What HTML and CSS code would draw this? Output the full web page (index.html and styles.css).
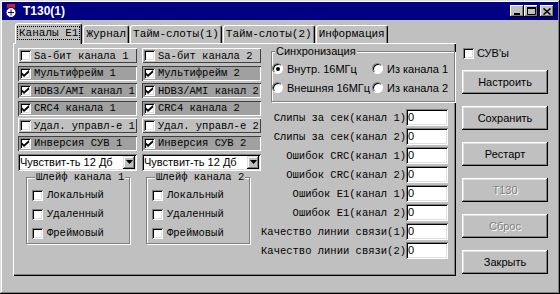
FILE: index.html
```html
<!DOCTYPE html>
<html lang="ru">

<head>
    <meta charset="UTF-8">
    <title>T130(1)</title>
    <link rel="stylesheet" href="styles.css">
</head>

<body>
    <div class="window">
        <div class="titlebar">
            <svg class="app-icon" viewBox="0 0 14 14" width="14" height="14">
                <rect x="3" y="0" width="8" height="4" fill="#d02020" />
                <circle cx="7" cy="8.5" r="5" fill="#fff" stroke="#000080" />
                <path d="M4 8.5h6M7 5.5v6" stroke="#000080" />
            </svg>
            <span class="title">T130(1)</span>
            <div class="caption-buttons">
                <span class="cap-btn">
                    <svg width="8" height="7"><rect x="1" y="5" width="6" height="2" /></svg>
                </span>
                <span class="cap-btn">
                    <svg width="9" height="8"><path d="M0.5 0.5h8v7h-8z" fill="none" stroke="#000" /><rect x="0" y="0" width="9" height="2" /></svg>
                </span>
                <span class="cap-btn close">
                    <svg width="8" height="7"><path d="M0.5 0.5l7 6M7.5 0.5l-7 6" stroke="#000" stroke-width="1.5" /></svg>
                </span>
            </div>
        </div>

        <div class="client">
            <div class="tabs">
                <div class="tab-strip">
                    <div class="tab active"><span class="focus">Каналы E1</span></div>
                    <div class="tab">Журнал</div>
                    <div class="tab">Тайм-слоты(1)</div>
                    <div class="tab">Тайм-слоты(2)</div>
                    <div class="tab">Информация</div>
                </div>

                <div class="tab-panel">
                    <div class="left-block">
                        <div class="toggles">
                            <div class="toggle"><span class="check"></span>Sa-бит канала 1</div>
                            <div class="toggle"><span class="check"></span>Sa-бит канала 2</div>
                            <div class="toggle on"><span class="check checked"></span>Мультифрейм 1</div>
                            <div class="toggle on"><span class="check checked"></span>Мультифрейм 2</div>
                            <div class="toggle on"><span class="check checked"></span>HDB3/AMI канал 1</div>
                            <div class="toggle on"><span class="check checked"></span>HDB3/AMI канал 2</div>
                            <div class="toggle on"><span class="check checked"></span>CRC4 канала 1</div>
                            <div class="toggle on"><span class="check checked"></span>CRC4 канала 2</div>
                            <div class="toggle"><span class="check"></span>Удал. управл-е 1</div>
                            <div class="toggle"><span class="check"></span>Удал. управл-е 2</div>
                            <div class="toggle on"><span class="check checked"></span>Инверсия СУВ 1</div>
                            <div class="toggle on"><span class="check checked"></span>Инверсия СУВ 2</div>
                            <div class="combo">
                                <span class="combo-text">Чувствит-ть 12 Дб</span>
                                <span class="combo-btn"><svg width="7" height="4"><path d="M0 0h7l-3.5 4z" /></svg></span>
                            </div>
                            <div class="combo">
                                <span class="combo-text">Чувствит-ть 12 Дб</span>
                                <span class="combo-btn"><svg width="7" height="4"><path d="M0 0h7l-3.5 4z" /></svg></span>
                            </div>
                        </div>

                        <div class="loops">
                            <div class="group loop">
                                <div class="group-title">Шлейф канала 1</div>
                                <div class="loop-row"><span class="check"></span>Локальный</div>
                                <div class="loop-row"><span class="check"></span>Удаленный</div>
                                <div class="loop-row"><span class="check"></span>Фреймовый</div>
                            </div>
                            <div class="group loop">
                                <div class="group-title">Шлейф канала 2</div>
                                <div class="loop-row"><span class="check"></span>Локальный</div>
                                <div class="loop-row"><span class="check"></span>Удаленный</div>
                                <div class="loop-row"><span class="check"></span>Фреймовый</div>
                            </div>
                        </div>
                    </div>

                    <div class="right-block">
                        <div class="group sync">
                            <div class="group-title sans">Синхронизация</div>
                            <div class="sync-grid">
                                <div class="radio-item"><span class="radio selected"></span>Внутр. 16МГц</div>
                                <div class="radio-item"><span class="radio"></span>Из канала 1</div>
                                <div class="radio-item"><span class="radio"></span>Внешняя 16МГц</div>
                                <div class="radio-item"><span class="radio"></span>Из канала 2</div>
                            </div>
                        </div>

                        <div class="stats">
                            <div class="stat"><span class="stat-label">Слипы за сек(канал 1)</span><span class="field">0</span></div>
                            <div class="stat"><span class="stat-label">Слипы за сек(канал 2)</span><span class="field">0</span></div>
                            <div class="stat"><span class="stat-label">Ошибок CRC(канал 1)</span><span class="field">0</span></div>
                            <div class="stat"><span class="stat-label">Ошибок CRC(канал 2)</span><span class="field">0</span></div>
                            <div class="stat"><span class="stat-label">Ошибок E1(канал 1)</span><span class="field">0</span></div>
                            <div class="stat"><span class="stat-label">Ошибок E1(канал 2)</span><span class="field">0</span></div>
                            <div class="stat"><span class="stat-label">Качество линии связи(1)</span><span class="field">0</span></div>
                            <div class="stat"><span class="stat-label">Качество линии связи(2)</span><span class="field">0</span></div>
                        </div>
                    </div>
                </div>
            </div>

            <div class="side">
                <div class="side-check"><span class="check"></span>СУВ'ы</div>
                <div class="btn">Настроить</div>
                <div class="btn">Сохранить</div>
                <div class="btn">Рестарт</div>
                <div class="btn disabled">T130</div>
                <div class="btn disabled">Сброс</div>
                <div class="btn">Закрыть</div>
            </div>
        </div>
    </div>
</body>

</html>
```

FILE: styles.css
```css
:root {
    --face: #c0c0c0;
    /* поверхность окна */
    --light: #dfdfdf;
    --hilite: #fff;
    --shadow: #808080;
    --dark: #000;
    --caption: #000080;
    --pressed: #a0a0a0;
    /* нажатая кнопка-флажок */
    --mono: "Liberation Mono", "Courier New", monospace;
}

* {
    box-sizing: border-box;
}

body {
    margin: 0;
    background: var(--face);
    font-family: "Liberation Sans", Arial, sans-serif;
    font-size: 11px;
    color: #000;
}

.window {
    width: 560px;
    height: 294px;
    padding: 2px;
    background: var(--face);
    box-shadow: inset -1px -1px var(--dark), inset 1px 1px var(--light),
        inset -2px -2px var(--shadow), inset 2px 2px var(--hilite);
}

/* заголовок окна */
.titlebar {
    height: 18px;
    background: var(--caption);
    color: #fff;
    display: flex;
    align-items: center;
    padding: 0 4px 0 2px;
}

.app-icon {
    margin-right: 5px;
}

.title {
    font-weight: bold;
    font-size: 12px;
}

.caption-buttons {
    margin-left: auto;
    display: flex;
}

.cap-btn {
    width: 14px;
    height: 12px;
    background: var(--face);
    display: flex;
    align-items: center;
    justify-content: center;
    box-shadow: inset -1px -1px var(--dark), inset 1px 1px var(--hilite),
        inset -2px -2px var(--shadow);
}

.cap-btn.close {
    margin-left: 2px;
}

/* рабочая область */
.client {
    display: flex;
    padding: 3px 0 0 11px;
}

.tabs {
    width: 443px;
}

.tab-strip {
    display: flex;
    align-items: flex-end;
    height: 20px;
    padding-left: 2px;
    position: relative;
    z-index: 1;
}

.tab {
    height: 18px;
    padding: 0 2px;
    font-family: var(--mono);
    font-size: 11px;
    line-height: 16px;
    border: 1px solid var(--hilite);
    border-bottom: none;
    border-right-color: var(--dark);
    border-radius: 3px 3px 0 0;
    box-shadow: inset -1px 0 var(--shadow);
    margin-right: 1px;
    background: var(--face);
    white-space: nowrap;
}

.tab.active {
    height: 21px;
    margin-bottom: -1px;
    padding-top: 1px;
}

.focus {
    outline: 1px dotted #000;
    padding: 0 1px;
}

.tab-panel {
    height: 233px;
    padding: 5px 0 0 5px;
    display: flex;
    box-shadow: inset 1px 1px var(--hilite), inset -1px -1px var(--dark),
        inset -2px -2px var(--shadow);
}

.left-block {
    width: 243px;
    flex-shrink: 0;
}

.toggles {
    display: grid;
    grid-template-columns: 119px 119px;
    column-gap: 5px;
    row-gap: 2.6px;
}

.toggle {
    height: 15px;
    display: flex;
    align-items: center;
    padding-left: 2px;
    font-family: var(--mono);
    font-size: 10.5px;
    white-space: nowrap;
    box-shadow: inset 1px 1px var(--hilite), inset -1px -1px #404040;
}

.toggle.on {
    background: var(--pressed);
    box-shadow: inset 1px 1px #404040, inset -1px -1px var(--hilite);
}

.toggle .check {
    margin-right: 3px;
}

.check {
    width: 11px;
    height: 11px;
    flex-shrink: 0;
    background: #fff;
    box-shadow: inset 1px 1px var(--shadow), inset -1px -1px var(--hilite),
        inset 2px 2px var(--dark), inset -2px -2px var(--light);
}

.check.checked {
    background: #fff url("data:image/svg+xml,%3Csvg xmlns='http://www.w3.org/2000/svg' viewBox='0 0 7 7'%3E%3Cpath d='M0 2.5L2 4.5L7 0V2.5L2 7L0 5Z'/%3E%3C/svg%3E") no-repeat 2px 2px / 7px 7px;
}

.combo {
    height: 17px;
    display: flex;
    align-items: center;
    padding: 0 2px;
    background: #fff;
    box-shadow: inset 1px 1px var(--shadow), inset -1px -1px var(--hilite),
        inset 2px 2px var(--dark), inset -2px -2px var(--light);
}

.combo-text {
    flex: 1;
    white-space: nowrap;
}

.combo-btn {
    width: 12px;
    height: 13px;
    display: flex;
    align-items: center;
    justify-content: center;
    background: var(--face);
    box-shadow: inset -1px -1px var(--dark), inset 1px 1px var(--light),
        inset -2px -2px var(--shadow), inset 2px 2px var(--hilite);
}

/* рамки групп */
.group {
    border: 1px solid var(--shadow);
    box-shadow: inset 1px 1px var(--hilite), 1px 1px var(--hilite);
}

.group-title {
    width: fit-content;
    margin: -7px 0 3px 3px;
    padding: 0 1px;
    line-height: 12px;
    background: var(--face);
    font-family: var(--mono);
    font-size: 10.5px;
}

.group-title.sans {
    font-family: "Liberation Sans", Arial, sans-serif;
    font-size: 11px;
}

.loops {
    display: flex;
    gap: 16px;
    margin: 6px 0 0 8px;
}

.loop {
    width: 104px;
    height: 67px;
    padding-left: 5px;
}

.loop-row {
    height: 19px;
    display: flex;
    align-items: center;
    gap: 4px;
    font-family: var(--mono);
    font-size: 10.5px;
}

.right-block {
    flex: 1;
    display: flex;
    flex-direction: column;
    min-width: 0;
}

.sync {
    height: 51px;
    margin: 3px 1px 0 10px;
}

.sync .group-title {
    margin-left: 3px;
    margin-bottom: 2px;
}

.sync-grid {
    display: grid;
    grid-template-columns: 100px auto;
    grid-auto-rows: 19px;
}

.radio-item {
    display: flex;
    align-items: center;
    gap: 4px;
    white-space: nowrap;
}

.radio {
    width: 11px;
    height: 11px;
    border-radius: 50%;
    background: #fff;
    border: 1px solid;
    border-color: var(--shadow) var(--hilite) var(--hilite) var(--shadow);
    box-shadow: inset 1px 1px var(--dark);
    display: flex;
    align-items: center;
    justify-content: center;
}

.radio.selected::after {
    content: "";
    width: 4px;
    height: 4px;
    border-radius: 50%;
    background: #000;
}

.stats {
    margin: 6px 8px 0 0;
    display: flex;
    flex-direction: column;
}

.stat {
    height: 19px;
    display: flex;
    align-items: center;
    justify-content: flex-end;
}

.stat-label {
    font-family: var(--mono);
    font-size: 10.5px;
    white-space: nowrap;
}

.field {
    width: 42px;
    height: 17px;
    flex-shrink: 0;
    padding-left: 2px;
    line-height: 17px;
    background: #fff;
    box-shadow: inset 1px 1px var(--shadow), inset -1px -1px var(--hilite),
        inset 2px 2px var(--dark), inset -2px -2px var(--light);
}

/* кнопки справа */
.side {
    width: 86px;
    margin-left: 6px;
    display: flex;
    flex-direction: column;
    gap: 12px;
}

.side-check {
    height: 12px;
    margin: 24px 0 -1px 1px;
    display: flex;
    align-items: center;
    gap: 3px;
}

.btn {
    height: 24px;
    display: flex;
    align-items: center;
    justify-content: center;
    box-shadow: inset -1px -1px var(--dark), inset 1px 1px var(--hilite),
        inset -2px -2px var(--shadow), inset 2px 2px var(--light);
}

.btn.disabled {
    color: var(--shadow);
    text-shadow: 1px 1px var(--hilite);
}
```
